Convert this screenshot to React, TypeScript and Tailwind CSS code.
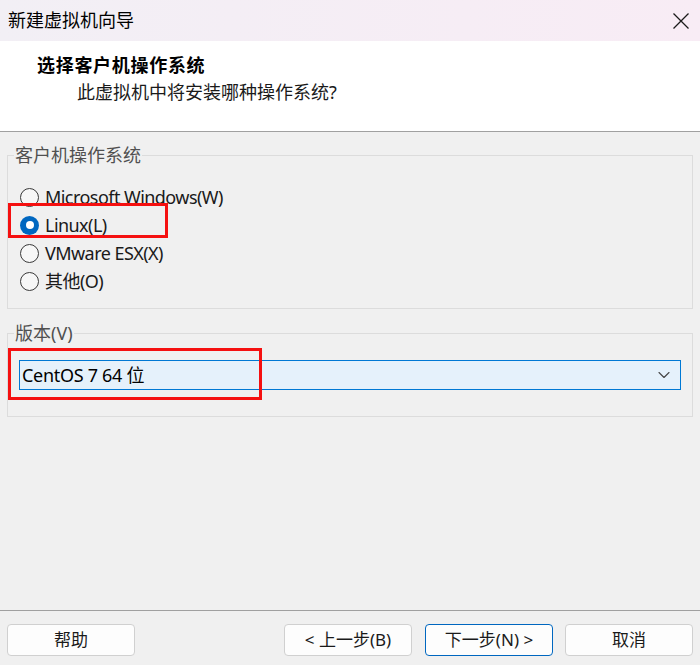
import { ChevronDown } from "lucide-react";

const radios = [
  { label: "Microsoft Windows(W)", checked: false },
  { label: "Linux(L)", checked: true },
  { label: "VMware ESX(X)", checked: false },
  { label: "其他(O)", checked: false },
];

function Radio({ checked }: { checked: boolean }) {
  if (checked) {
    return (
      <span className="w-[19px] h-[19px] rounded-full bg-[#0067c0] flex items-center justify-center shrink-0">
        <span className="w-[8px] h-[8px] rounded-full bg-white" />
      </span>
    );
  }
  return <span className="w-[19px] h-[19px] rounded-full border border-[#3a3a3a] bg-[#f7f7f7] shrink-0" />;
}

function Button({ children, primary }: { children: React.ReactNode; primary?: boolean }) {
  return (
    <button
      className={
        "w-[128px] h-[32px] rounded-[4px] bg-[#fdfdfd] text-[17px] text-[#1a1a1a] flex items-center justify-center " +
        (primary ? "border border-[#0067c0]" : "border border-[#d0d0d0]")
      }
    >
      {children}
    </button>
  );
}

export default function App() {
  return (
    <div className="relative w-[700px] h-[665px] bg-[#f0f0f0] flex flex-col font-['Noto_Sans','Noto_Sans_CJK_SC',sans-serif] overflow-hidden">
      {/* title bar */}
      <div className="h-[41px] flex items-center justify-between pl-[8px] pr-[11px] bg-gradient-to-r from-[#f2eff5] to-[#f8ecf5]">
        <span className="text-[18px] text-black">新建虚拟机向导</span>
        <svg width="16" height="16" viewBox="0 0 16 16" className="text-[#1a1a1a]">
          <path d="M0.5 0.5 15.5 15.5 M15.5 0.5 0.5 15.5" stroke="currentColor" strokeWidth="1.3" fill="none" />
        </svg>
      </div>

      {/* header */}
      <div className="h-[91px] bg-white border-b border-[#a0a0a0] pt-[11px]">
        <div className="pl-[37px] text-[18px] font-bold tracking-[0.7px] text-black leading-[26px]">选择客户机操作系统</div>
        <div className="pl-[77px] text-[18px] text-[#1a1a1a] leading-[26px] mt-px">此虚拟机中将安装哪种操作系统?</div>
      </div>

      {/* body */}
      <div className="flex-1 px-[7px] pt-[12px]">
        <fieldset className="border border-[#dcdcdc] px-0 pb-[13px] m-0">
          <legend className="ml-[6px] px-px text-[18px] text-[#505050] leading-[22px]">客户机操作系统</legend>
          <div className="flex flex-col pt-[17px]">
            {radios.map((r) => (
              <div key={r.label} className="h-[28px] flex items-center gap-[6px] pl-[12px]">
                <Radio checked={r.checked} />
                <span className="text-[18px] tracking-[-0.55px] text-[#1a1a1a]">{r.label}</span>
              </div>
            ))}
          </div>
        </fieldset>

        <fieldset className="border border-[#dcdcdc] px-0 pb-[26px] mt-[13px]">
          <legend className="ml-[6px] px-px text-[18px] text-[#505050] leading-[22px]">版本(V)</legend>
          <div className="pt-[16px] px-[11px]">
            <div className="h-[30px] bg-[#e5f1fb] border border-[#0078d4] flex items-center justify-between pl-[2px] pr-[6px]">
              <span className="text-[18px] tracking-[-0.3px] text-black">CentOS 7 64 位</span>
              <ChevronDown size={20} strokeWidth={1.3} className="text-[#444]" />
            </div>
          </div>
        </fieldset>
      </div>

      {/* footer */}
      <div className="h-[55px] border-t border-[#a0a0a0] flex items-start pt-[13px] px-[7px]">
        <Button>帮助</Button>
        <div className="ml-auto flex gap-[13px]">
          <Button>&lt; 上一步(B)</Button>
          <Button primary>下一步(N) &gt;</Button>
        </div>
        <div className="ml-[12px]">
          <Button>取消</Button>
        </div>
      </div>

      {/* red annotation boxes */}
      <div className="absolute left-[8px] top-[203px] w-[160px] h-[35px] border-[3px] border-[#f51010] pointer-events-none" />
      <div className="absolute left-[8px] top-[348px] w-[254px] h-[52px] border-[3px] border-[#f51010] pointer-events-none" />
    </div>
  );
}
